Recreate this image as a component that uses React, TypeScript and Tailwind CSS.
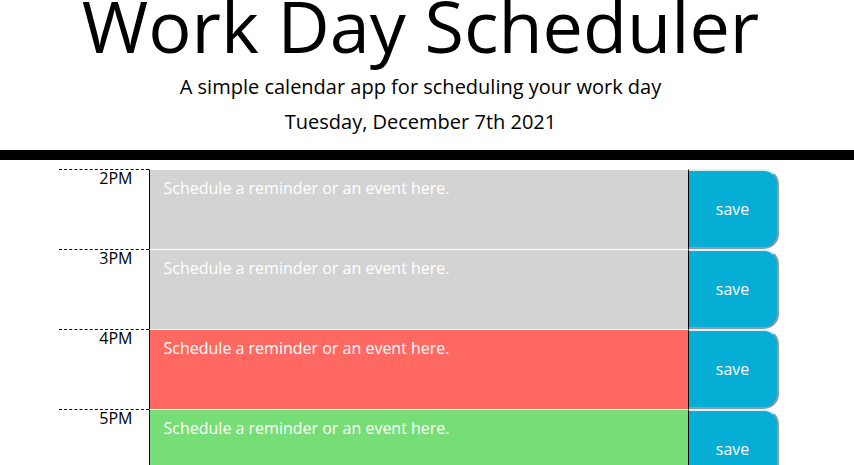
import React from "react";

const rows = [
  { hour: "2PM", bg: "bg-[#d3d3d3]" },
  { hour: "3PM", bg: "bg-[#d3d3d3]" },
  { hour: "4PM", bg: "bg-[#ff6961]" },
  { hour: "5PM", bg: "bg-[#77dd77]" },
];

export default function App() {
  return (
    <div className="w-[854px] h-[465px] overflow-hidden bg-white text-black [font-family:'Open_Sans',sans-serif]">
      <header className="flex flex-col border-b-[10px] border-black">
        <div className="w-[841px] flex flex-col items-center">
          <h1 className="text-[72px] font-normal leading-[50px] m-0">Work Day Scheduler</h1>
          <p className="mt-[22px] text-[20px] font-normal leading-[30px]">
            A simple calendar app for scheduling your work day
          </p>
          <p className="mt-[5px] mb-[13px] text-[20px] font-normal leading-[30px]">
            Tuesday, December 7th 2021
          </p>
        </div>
      </header>
      <main className="w-[837px] flex justify-center pt-[9px]">
        <div className="w-[720px] flex flex-col">
          {rows.map((r) => (
            <div key={r.hour} className="flex h-[80px] shrink-0">
              <div className="w-[90px] border-t border-dashed border-black text-right pr-[16px] text-[16px] leading-[17px]">
                {r.hour}
              </div>
              <textarea
                className={`w-[540px] h-full resize-none border-x border-black border-t border-t-white outline-none ${r.bg} pl-[14px] pt-[6px] text-[16px] leading-[24px] placeholder:text-white [font-family:'Open_Sans',sans-serif]`}
                placeholder="Schedule a reminder or an event here."
              />
              <button className="w-[90px] h-full flex items-center justify-center bg-[#06aed5] text-white text-[16px] rounded-r-[15px] border-t-2 border-t-[#d9eef3] border-r-2 border-r-[#8a9ea4] border-b-2 border-b-[#8a9ea4] [font-family:'Open_Sans',sans-serif]">
                save
              </button>
            </div>
          ))}
        </div>
      </main>
    </div>
  );
}
